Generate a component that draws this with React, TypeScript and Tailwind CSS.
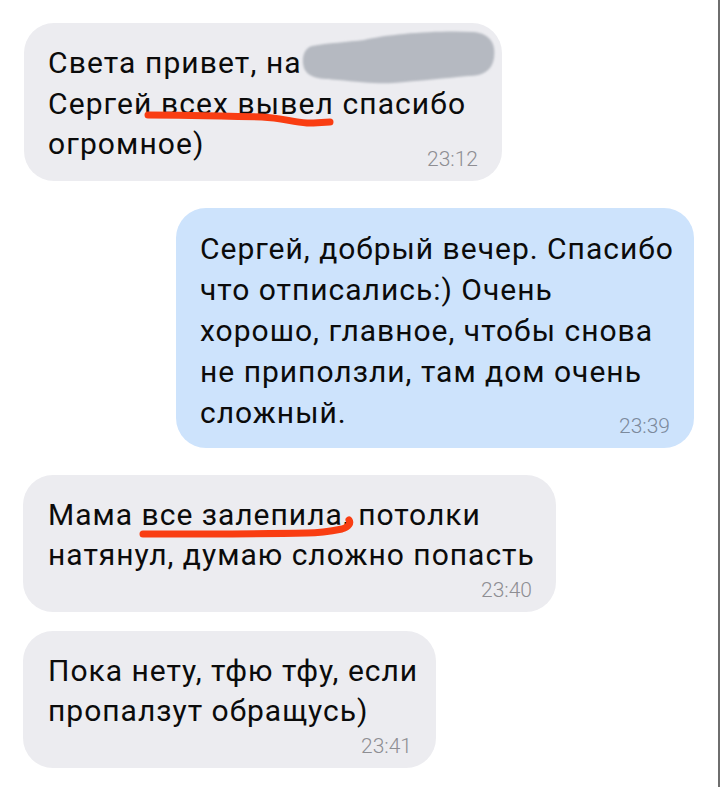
import React from 'react';

interface Bubble {
  lines: string[];
  time: string;
  side: 'in' | 'out';
  width: string;
  inline: boolean; // timestamp sits on the last text row
}

const FONT = { fontFamily: 'Roboto, "Noto Sans", Arial, sans-serif' };

// hand-drawn red marks and the grey blur patch lie over the bubbles
const Scribble: React.FC<{ d: string; className: string; w: number; h: number }> = ({ d, className, w, h }) => (
  <svg className={className} width={w} height={h} viewBox={`0 0 ${w} ${h}`} fill="none">
    <path d={d} stroke="#f93d12" strokeWidth="7" strokeLinecap="round" strokeLinejoin="round" />
  </svg>
);

const Bubble1: React.FC = () => (
  <div className="relative w-[478px] self-start rounded-[30px] bg-[#ececf0] pl-[24px] pr-[24px] pt-[20px] pb-[10px]">
    <div className="text-[30px] leading-[40.5px] text-[#0b0b0b] tracking-[1.1px]">
      <div>Света привет, на</div>
      <div>Сергей всех вывел спасибо</div>
      <div>огромное)</div>
    </div>
    <div className="-mt-[18px] text-right text-[21px] leading-[24px] font-light text-[#8e8e93]">23:12</div>
    {/* blurred name */}
    <svg className="absolute left-[274px] top-[3px]" width="200" height="62" viewBox="0 0 200 62">
      <defs>
        <filter id="soft" x="-10%" y="-10%" width="120%" height="120%">
          <feGaussianBlur stdDeviation="1.2" />
        </filter>
      </defs>
      <path
        filter="url(#soft)"
        fill="#b5b9c1"
        d="M14 20 C30 17 50 16 66 14 C90 8 140 4 176 6 C194 8 198 20 196 32 C194 44 186 50 170 50 C150 52 120 55 95 57 C80 58 60 56 40 54 C22 53 10 52 6 42 C3 32 6 22 14 20 Z"
      />
    </svg>
    <Scribble
      className="absolute left-[118px] top-[85px]"
      w={200}
      h={24}
      d="M6 7 C40 7 80 8 120 9 C140 10 150 14 165 15 C175 15 182 14 188 14"
    />
  </div>
);

const App: React.FC = () => {
  const rest: Bubble[] = [
    {
      lines: ['Сергей, добрый вечер. Спасибо', 'что отписались:) Очень', 'хорошо, главное, чтобы снова', 'не приползли, там дом очень', 'сложный.'],
      time: '23:39',
      side: 'out',
      width: 'w-[518px]',
      inline: true,
    },
  ];

  return (
    <div className="min-h-[787px] w-[720px] bg-white border-r-2 border-[#6e6e6e]" style={FONT}>
      <div className="flex flex-col pt-[23px] pl-[24px] pr-[24px]">
        <Bubble1 />

        {rest.map((b, i) => (
          <div
            key={i}
            className={`mt-[27px] ${b.width} self-end rounded-[30px] bg-[#cde3fc] pl-[24px] pr-[24px] pt-[20px] pb-[10px]`}
          >
            <div className="text-[30px] leading-[41px] text-[#0b0b0b] tracking-[1px] whitespace-nowrap">
              {b.lines.map((l) => (
                <div key={l}>{l}</div>
              ))}
            </div>
            <div className="-mt-[19px] text-right text-[21px] leading-[24px] font-light text-[#7c8a9c]">{b.time}</div>
          </div>
        ))}

        <div className="relative mt-[27px] w-[533px] -ml-[1px] self-start rounded-[30px] bg-[#ececf0] pl-[25px] pr-[24px] pt-[20px] pb-[10px]">
          <div className="text-[30px] leading-[40.5px] text-[#0b0b0b] tracking-[1px] whitespace-nowrap">
            <div>Мама все залепила, потолки</div>
            <div>натянул, думаю сложно попасть</div>
          </div>
          <div className="mt-[2px] text-right text-[21px] leading-[24px] font-light text-[#8e8e93]">23:40</div>
          <Scribble
            className="absolute left-[114px] top-[40px]"
            w={220}
            h={26}
            d="M6 19 C60 19 120 19 170 18 C185 18 195 16 205 14 C212 12 214 8 212 5"
          />
        </div>

        <div className="mt-[19px] w-[413px] -ml-[1px] self-start rounded-[30px] bg-[#ececf0] pl-[25px] pr-[24px] pt-[20px] pb-[10px]">
          <div className="text-[30px] leading-[40.5px] text-[#0b0b0b] tracking-[1px] whitespace-nowrap">
            <div>Пока нету, тфю тфу, если</div>
            <div>пропалзут обращусь)</div>
          </div>
          <div className="mt-[2px] text-right text-[21px] leading-[24px] font-light text-[#8e8e93]">23:41</div>
        </div>
      </div>
    </div>
  );
};

export default App;
